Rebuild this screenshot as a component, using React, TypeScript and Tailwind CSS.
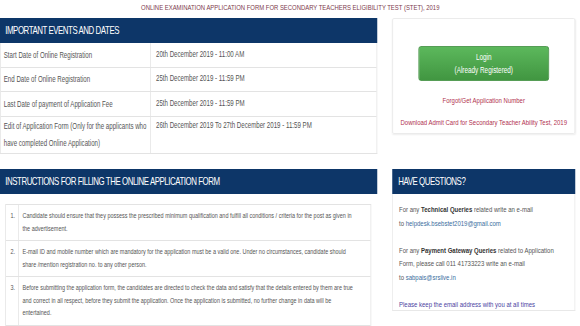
import React from "react";

// The reference is a squeezed page: lay it out at 774px wide and squeeze it by 0.75.
const events = [
  { label: "Start Date of Online Registration", value: "20th December 2019 - 11:00 AM" },
  { label: "End Date of Online Registration", value: "25th December 2019 - 11:59 PM" },
  { label: "Last Date of payment of Application Fee", value: "25th December 2019 - 11:59 PM" },
  {
    label: "Edit of Application Form (Only for the applicants who have completed Online Application)",
    value: "26th December 2019 To 27th December 2019 - 11:59 PM",
  },
];

const rowHeights = ["h-[24px]", "h-[24px]", "h-[25px]", "h-[37px]"];

const instructions = [
  "Candidate should ensure that they possess the prescribed minimum qualification and fulfill all conditions / criteria for the post as given in\nthe advertisement.",
  "E-mail ID and mobile number which are mandatory for the application must be a valid one. Under no circumstances, candidate should\nshare /mention registration no. to any other person.",
  "Before submitting the application form, the candidates are directed to check the data and satisfy that the details entered by them are true\nand correct in all respect, before they submit the application. Once the application is submitted, no further change in data will be\nentertained.",
  "Candidates are advised to keep a printout of the application form for future reference.",
];

export default function App() {
  return (
    <div className="w-[580px] h-[326px] overflow-hidden bg-white">
      <div
        className="w-[774px] origin-top-left scale-x-[0.75] text-[#555]"
        style={{ fontFamily: '"Liberation Sans", Arial, sans-serif' }}
      >
        {/* Page title */}
        <div className="h-[18px] pt-[3px] text-center text-[7.9px] leading-[9px] text-[#7d3a4c]">
          ONLINE EXAMINATION APPLICATION FORM FOR SECONDARY TEACHERS ELIGIBILITY TEST (STET), 2019
        </div>

        <div className="flex gap-[20px] pr-[7px]">
          {/* Left column */}
          <div className="w-[503px] shrink-0">
            <div className="h-[25px] bg-[#0d3668] pl-[7px] flex items-center text-white text-[10.5px] tracking-[-0.6px]">
              IMPORTANT EVENTS AND DATES
            </div>
            <div className="border-x border-b border-[#e3e3e3] text-[8.2px]">
              {events.map((e, i) => (
                <div key={i} className={`flex ${rowHeights[i]} ${i > 0 ? "border-t border-[#e3e3e3]" : ""}`}>
                  <div className="w-[200px] shrink-0 border-r border-[#e3e3e3] px-[4px] flex items-center leading-[17px]">
                    {e.label}
                  </div>
                  <div className={`flex-1 px-[7px] flex ${i === 3 ? "items-start pt-[3px] leading-[12px]" : "items-center"}`}>
                    {e.value}
                  </div>
                </div>
              ))}
            </div>

            <div className="mt-[15px] h-[25px] bg-[#0d3668] pl-[7px] flex items-center text-white text-[10.5px] tracking-[-0.6px]">
              INSTRUCTIONS FOR FILLING THE ONLINE APPLICATION FORM
            </div>
            <div className="mt-[10px] ml-[7px] w-[488px] border border-[#e3e3e3] text-[7.3px] leading-[12.5px]">
              {instructions.map((t, i) => (
                <div key={i} className={`flex ${i > 0 ? "border-t border-[#e3e3e3]" : ""}`}>
                  <div className="w-[17px] shrink-0 border-r border-[#e3e3e3] pl-[6px] pt-[5px]">{i + 1}.</div>
                  <div className="flex-1 pl-[5px] pr-[4px] pt-[5px] pb-[5px] whitespace-pre-line">{t}</div>
                </div>
              ))}
            </div>
          </div>

          {/* Right column */}
          <div className="w-[244px] shrink-0">
            <div className="h-[116px] border border-[#e8e8e8] rounded-[2px] shadow-[0_1px_2px_rgba(0,0,0,0.07)] flex flex-col items-center">
              <button className="mt-[27px] w-[174px] h-[35px] rounded-[3px] border border-[#3e8f3e] bg-gradient-to-b from-[#5cb85c] to-[#419641] text-white text-[8.5px] leading-[13px]">
                Login
                <br />
                (Already Registered)
              </button>
              <div className="mt-[14px] text-[8px] text-[#b2324f]">Forgot/Get Application Number</div>
              <div className="mt-[10px] text-[8px] text-[#b2324f] whitespace-nowrap">
                Download Admit Card for Secondary Teacher Ability Test, 2019
              </div>
            </div>

            <div className="mt-[35px] h-[25px] bg-[#0d3668] pl-[8px] flex items-center text-white text-[10.5px] tracking-[-0.6px]">
              HAVE QUESTIONS?
            </div>
            <div className="h-[117px] border-x border-b border-[#e8e8e8] px-[8px] pt-[9px] text-[8px] leading-[13.5px]">
              <p>
                For any <b className="text-[#333]">Technical Queries</b> related write an e-mail
                <br />
                to <span className="text-[#3a6e9e]">helpdesk.bsebstet2019@gmail.com</span>
              </p>
              <p className="mt-[13.5px]">
                For any <b className="text-[#333]">Payment Gateway Queries</b> related to Application
                <br />
                Form, please call 011 41733223 write an e-mail
                <br />
                to <span className="text-[#3a6e9e]">sabpais@srslive.in</span>
              </p>
              <p className="mt-[13.5px] text-[#4a3f9f]">Please keep the email address with you at all times</p>
            </div>
          </div>
        </div>
      </div>
    </div>
  );
}
